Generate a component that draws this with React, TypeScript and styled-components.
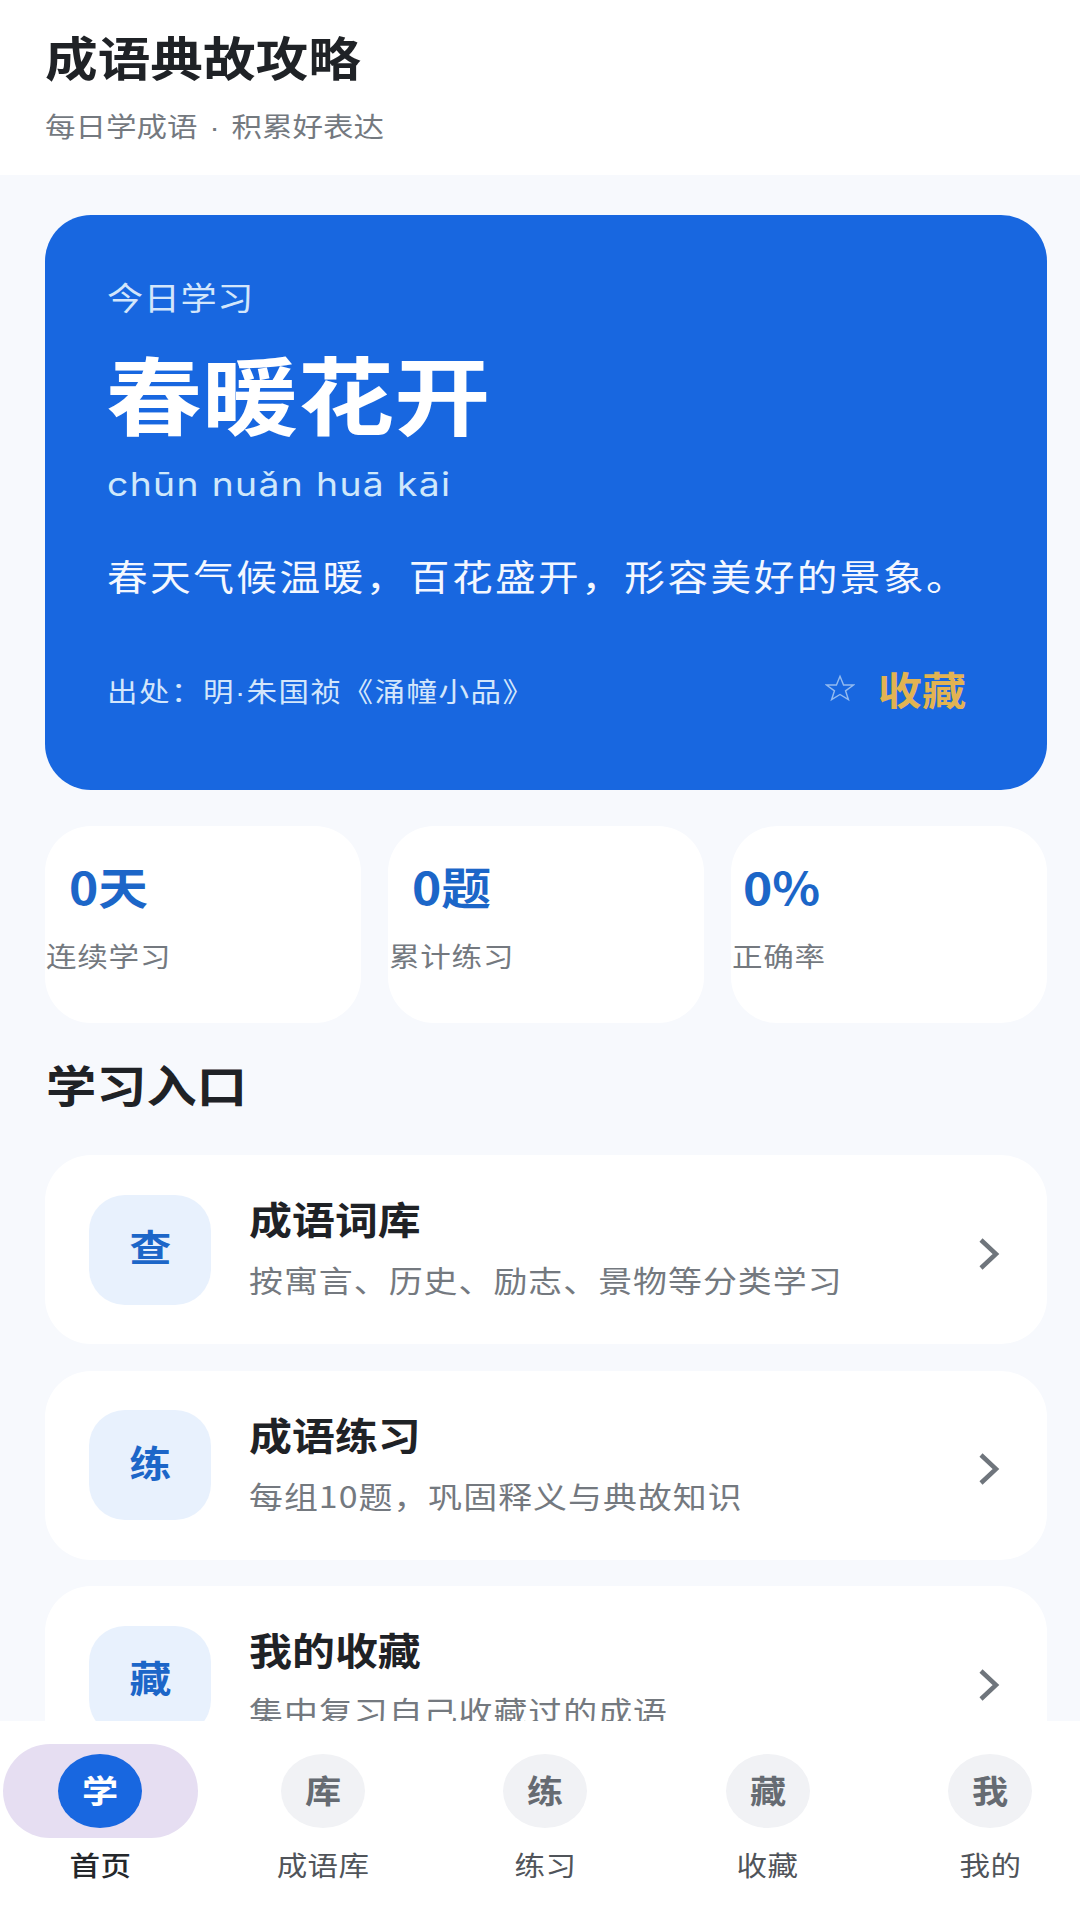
import React from "react";
import styled, { createGlobalStyle, css } from "styled-components";

const Global = createGlobalStyle`
  html, body { margin: 0; padding: 0; background: #f7f9fd; }
  * { box-sizing: border-box; }
  body { font-family: "Noto Sans CJK SC", "Noto Sans", sans-serif; }
`;

/* The reference's lettering is about 13% wider than it is tall. */
const wide = (origin: string) => css`
  transform: scaleX(1.13);
  transform-origin: ${origin};
`;

const Page = styled.div`
  width: 1080px; height: 1920px; display: flex; flex-direction: column; overflow: hidden; background: #f7f9fd;
`;
const Header = styled.header`
  height: 175px; flex: none; background: #fff; padding: 27px 0 0 45px;
`;
const AppTitle = styled.h1`
  ${wide("left")}
  margin: 0; font-size: 46.6px; line-height: 58px; font-weight: 700; color: #1f2226;
`;
const AppSub = styled.p`
  ${wide("left")}
  margin: 22.5px 0 0; font-family: "Liberation Sans", "Noto Sans CJK SC", sans-serif;
  font-size: 27px; line-height: 40px; color: #74797f; word-spacing: 3px;
`;
const Main = styled.main`
  flex: 1; min-height: 0; overflow: hidden; padding: 40px 33px 0 45px;
`;
const Hero = styled.section`
  height: 575px; border-radius: 46px; background: #1867e0; padding: 57.5px 81px 0 62px; color: #fff;
`;
const HeroTag = styled.div`
  ${wide("left")}
  font-size: 32px; line-height: 46px; letter-spacing: 0.5px; color: #d3e6fb;
`;
const HeroName = styled.div`
  ${wide("left")}
  margin: 18.5px 0 0 -1px; font-size: 85px; line-height: 110px; font-weight: 700;
`;
const HeroPinyin = styled.div`
  ${wide("left")}
  margin-top: 15px; font-family: "Inter", "Noto Sans", sans-serif; font-size: 33px; line-height: 44px; color: #cfe8fb; letter-spacing: 1.2px;
`;
const HeroMeaning = styled.div`
  ${wide("left")}
  margin-top: 40.5px; font-size: 36px; line-height: 56px; letter-spacing: 2.15px; color: #f3f7ff; white-space: nowrap;
`;
const HeroFoot = styled.div`
  margin-top: 57px; height: 56px; display: flex; align-items: center; justify-content: space-between;
`;
const HeroSource = styled.span`
  ${wide("left")}
  margin-top: 5px; font-family: "Liberation Sans", "Noto Sans CJK SC", sans-serif;
  font-size: 27px; letter-spacing: 1.3px; color: #d3e6fb;
`;
const Fav = styled.span`
  display: flex; align-items: center; gap: 33px;
`;
const FavLabel = styled.span`
  ${wide("right")}
  font-size: 39px; font-weight: 700; color: #e2b352;
`;
const Stats = styled.section`
  margin-top: 36px; display: grid; grid-template-columns: repeat(3, 1fr); gap: 27px;
`;
const Stat = styled.div`
  height: 197px; border-radius: 46px; background: #fff; padding-top: 29.5px;
`;
const StatValue = styled.div<{ $inset: number }>`
  ${wide("left")}
  margin-left: ${(p) => p.$inset}px; font-size: 44px; line-height: 60px; font-weight: 700; color: #1c66c8;
`;
const StatLabel = styled.div`
  ${wide("left")}
  margin: 18px 0 0 1px; font-size: 27px; line-height: 44px; letter-spacing: 0.7px; color: #74797f;
`;
const SectionTitle = styled.h2`
  ${wide("left")}
  margin: 32.5px 0 43.5px 1px; font-size: 44.5px; line-height: 56px; font-weight: 700; color: #1f2226;
`;
const List = styled.div`
  display: flex; flex-direction: column; gap: 26.5px;
`;
const Row = styled.div`
  height: 189px; flex: none; border-radius: 46px; background: #fff; display: flex; align-items: center; padding: 0 47px 0 44px;
`;
const RowIcon = styled.div`
  width: 122px; height: 110px; flex: none; border-radius: 36px; background: #e8f1fd; color: #1c66c8;
  display: flex; align-items: center; justify-content: center; padding-bottom: 7px;
`;
const RowGlyph = styled.span`
  ${wide("center")}
  font-size: 37px; font-weight: 700;
`;
const RowText = styled.div`
  flex: 1; margin: -3px 0 0 38px;
`;
const RowTitle = styled.div`
  ${wide("left")}
  font-size: 38px; line-height: 56px; font-weight: 700; color: #1f2226;
`;
const RowSub = styled.div`
  ${wide("left")}
  margin-top: 6px; font-size: 30px; line-height: 54px; letter-spacing: 0.9px; color: #74797f;
`;
const Chevron = styled.svg`
  width: 22px; height: 32px; flex: none; margin-top: 8px;
`;
const Nav = styled.nav`
  height: 199px; flex: none; background: #fff; padding-top: 23px;
  display: grid; grid-template-columns: repeat(5, 222.5px); margin-left: -11px; width: 1113px;
`;
const NavItem = styled.div`
  display: flex; flex-direction: column; align-items: center;
`;
const Pill = styled.div<{ $active?: boolean }>`
  width: 195px; height: 94px; border-radius: 47px; display: flex; align-items: center; justify-content: center;
  background: ${(p) => (p.$active ? "#e6def2" : "transparent")};
`;
const NavIcon = styled.div<{ $active?: boolean }>`
  width: 84px; height: 74px; border-radius: 50%; display: flex; align-items: center; justify-content: center;
  padding-bottom: 4px;
  background: ${(p) => (p.$active ? "#1867e0" : "#f1f2f5")};
  color: ${(p) => (p.$active ? "#fff" : "#666b72")};
`;
const NavGlyph = styled.span`
  ${wide("center")}
  font-size: 32px; font-weight: 700;
`;
const NavLabel = styled.div<{ $active?: boolean }>`
  ${wide("center")}
  margin-top: 6.5px; font-size: 27px; line-height: 40px; letter-spacing: 0.4px;
  font-weight: ${(p) => (p.$active ? 500 : 400)};
  color: ${(p) => (p.$active ? "#24272b" : "#50545a")};
`;

const stats: [string, string, number][] = [
  ["0天", "连续学习", 24],
  ["0题", "累计练习", 24],
  ["0%", "正确率", 12],
];
const rows = [
  ["查", "成语词库", "按寓言、历史、励志、景物等分类学习"],
  ["练", "成语练习", "每组10题，巩固释义与典故知识"],
  ["藏", "我的收藏", "集中复习自己收藏过的成语"],
];
const tabs = [
  ["学", "首页"],
  ["库", "成语库"],
  ["练", "练习"],
  ["藏", "收藏"],
  ["我", "我的"],
];

export default function App() {
  return (
    <Page>
      <Global />
      <Header>
        <AppTitle>成语典故攻略</AppTitle>
        <AppSub>每日学成语 · 积累好表达</AppSub>
      </Header>
      <Main>
        <Hero>
          <HeroTag>今日学习</HeroTag>
          <HeroName>春暖花开</HeroName>
          <HeroPinyin>chūn nuǎn huā kāi</HeroPinyin>
          <HeroMeaning>春天气候温暖，百花盛开，形容美好的景象。</HeroMeaning>
          <HeroFoot>
            <HeroSource>出处：明·朱国祯《涌幢小品》</HeroSource>
            <Fav>
              <svg width="30" height="28" viewBox="0 0 32 28" fill="none" stroke="#93bbf0" strokeWidth="1.5">
                <polygon points="16,1.5 19.8,10.8 30.5,10.8 21.9,17 25,26.5 16,20.9 7,26.5 10.1,17 1.5,10.8 12.2,10.8" />
              </svg>
              <FavLabel>收藏</FavLabel>
            </Fav>
          </HeroFoot>
        </Hero>
        <Stats>
          {stats.map(([v, l, inset]) => (
            <Stat key={l}>
              <StatValue $inset={inset}>{v}</StatValue>
              <StatLabel>{l}</StatLabel>
            </Stat>
          ))}
        </Stats>
        <SectionTitle>学习入口</SectionTitle>
        <List>
          {rows.map(([i, t, s]) => (
            <Row key={t}>
              <RowIcon>
                <RowGlyph>{i}</RowGlyph>
              </RowIcon>
              <RowText>
                <RowTitle>{t}</RowTitle>
                <RowSub>{s}</RowSub>
              </RowText>
              <Chevron viewBox="0 0 22 32" fill="none" stroke="#6f757c" strokeWidth="4.5">
                <path d="M3 2 L18 16 L3 30" />
              </Chevron>
            </Row>
          ))}
        </List>
      </Main>
      <Nav>
        {tabs.map(([i, l], idx) => (
          <NavItem key={l}>
            <Pill $active={idx === 0}>
              <NavIcon $active={idx === 0}>
                <NavGlyph>{i}</NavGlyph>
              </NavIcon>
            </Pill>
            <NavLabel $active={idx === 0}>{l}</NavLabel>
          </NavItem>
        ))}
      </Nav>
    </Page>
  );
}
